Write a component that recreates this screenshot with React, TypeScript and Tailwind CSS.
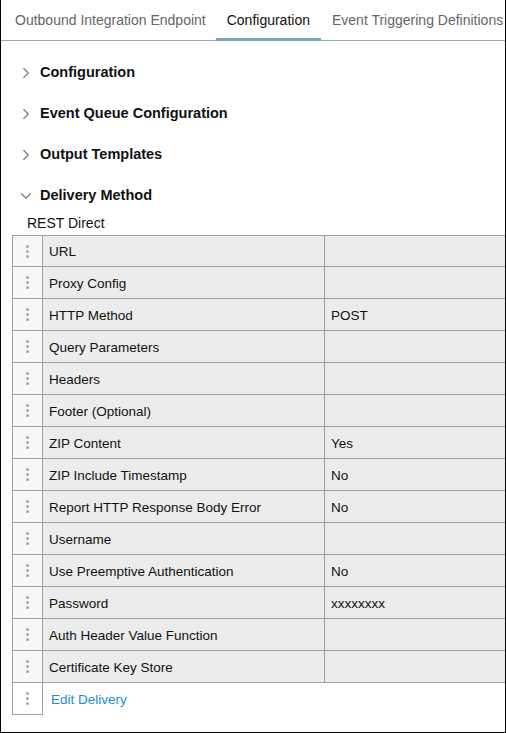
import { ChevronRight, ChevronDown } from 'lucide-react';

const rows: { label: string; value: string }[] = [
  { label: 'URL', value: '' },
  { label: 'Proxy Config', value: '' },
  { label: 'HTTP Method', value: 'POST' },
  { label: 'Query Parameters', value: '' },
  { label: 'Headers', value: '' },
  { label: 'Footer (Optional)', value: '' },
  { label: 'ZIP Content', value: 'Yes' },
  { label: 'ZIP Include Timestamp', value: 'No' },
  { label: 'Report HTTP Response Body Error', value: 'No' },
  { label: 'Username', value: '' },
  { label: 'Use Preemptive Authentication', value: 'No' },
  { label: 'Password', value: 'xxxxxxxx' },
  { label: 'Auth Header Value Function', value: '' },
  { label: 'Certificate Key Store', value: '' },
];

function Handle() {
  return (
    <div className="flex flex-col items-center gap-[2px]">
      <span className="h-[3px] w-[3px] rounded-full bg-[#a8a8a8]" />
      <span className="h-[3px] w-[3px] rounded-full bg-[#a8a8a8]" />
      <span className="h-[3px] w-[3px] rounded-full bg-[#a8a8a8]" />
    </div>
  );
}

function Section({ title, open }: { title: string; open?: boolean }) {
  return (
    <div className="flex h-[41px] items-center pl-[16px]">
      {open ? (
        <ChevronDown className="h-[18px] w-[18px] text-[#777]" strokeWidth={1.5} />
      ) : (
        <ChevronRight className="h-[18px] w-[18px] text-[#777]" strokeWidth={1.5} />
      )}
      <span className="ml-[5px] text-[14.5px] font-bold text-[#111]">{title}</span>
    </div>
  );
}

export default function App() {
  return (
    <div
      className="h-[733px] w-[506px] overflow-hidden border-b border-l border-r border-black bg-white text-[14px] text-[#111]"
      style={{ fontFamily: '"Liberation Sans", Arial, sans-serif' }}
    >
      <div className="flex h-[41px] border-b border-[#8fb0b8] text-[14px]">
        <div className="flex items-center pl-[14px] pr-[10px] text-[#666]">Outbound Integration Endpoint</div>
        <div className="mb-[-1px] flex items-center border-b-[3px] border-[#7fa7b0] px-[11px] pt-[3px] text-[#111]">
          Configuration
        </div>
        <div className="flex items-center whitespace-nowrap pl-[11px] text-[#666]">Event Triggering Definitions</div>
      </div>

      <div className="pt-[11px]">
        <Section title="Configuration" />
        <Section title="Event Queue Configuration" />
        <Section title="Output Templates" />
        <Section title="Delivery Method" open />
      </div>

      <div className="-mt-[4px] flex h-[23px] items-center pl-[26px] text-[14px]">REST Direct</div>

      <div className="ml-[11px] w-[520px] text-[13.5px]">
        {rows.map((row, i) => (
          <div
            key={row.label}
            className={`flex h-[32px] border-l border-r border-[#a0a0a0] bg-[#ececec] ${i === 0 ? 'border-t' : ''} border-b`}
          >
            <div className="flex w-[30px] shrink-0 items-center justify-center border-r border-[#a0a0a0] bg-[#f7f7f7]">
              <Handle />
            </div>
            <div className="flex w-[282px] shrink-0 items-center border-r border-[#a0a0a0] pl-[6px] pt-[3px]">
              {row.label}
            </div>
            <div className="flex flex-1 items-center pl-[6px] pt-[3px]">{row.value}</div>
          </div>
        ))}
        <div className="flex h-[32px]">
          <div className="flex w-[31px] shrink-0 items-center justify-center border-b border-l border-r border-[#a0a0a0]">
            <Handle />
          </div>
          <div className="flex items-center pl-[8px] pt-[3px] text-[#1a8fd1]">Edit Delivery</div>
        </div>
      </div>
    </div>
  );
}
